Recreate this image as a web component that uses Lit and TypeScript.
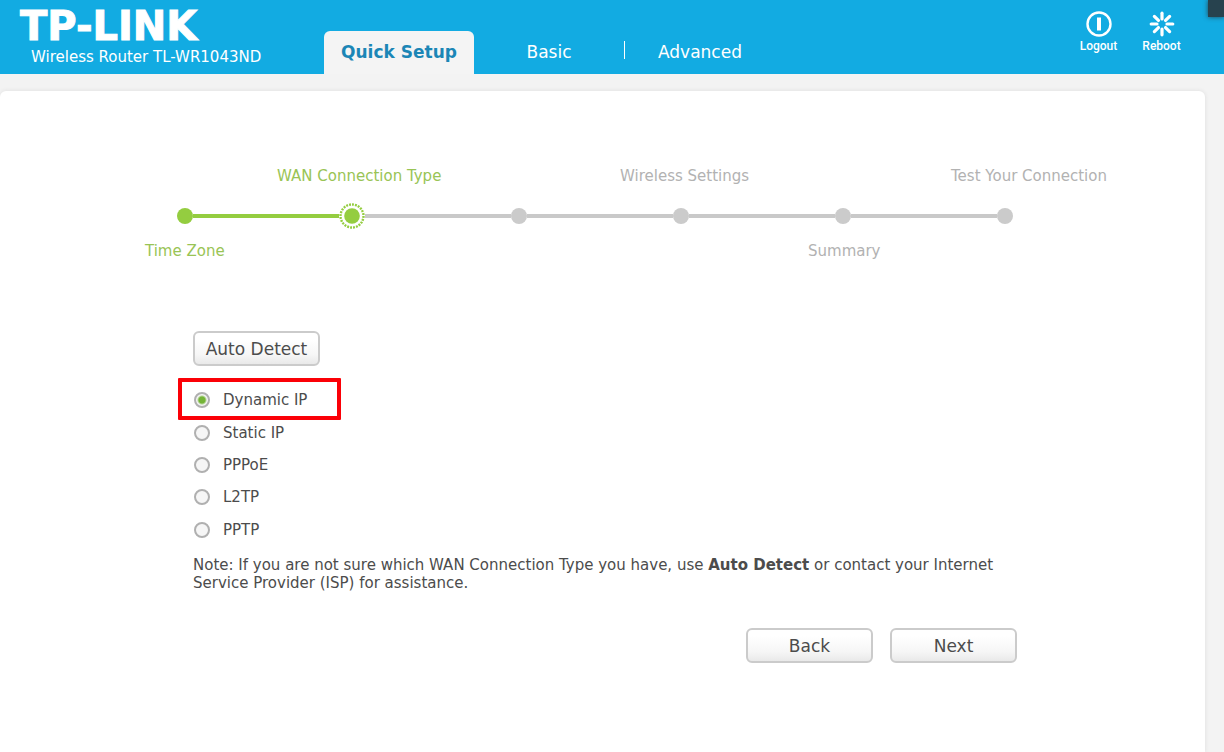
import { LitElement, html, css, svg } from "lit";
import { customElement, state } from "lit/decorators.js";

const STEPS = ["done", "current", "todo", "todo", "todo", "todo"];
const TYPES = ["Dynamic IP", "Static IP", "PPPoE", "L2TP", "PPTP"];
const RAYS = [0, 45, 90, 135, 180, 225, 270, 315];

@customElement("app-root")
export class AppRoot extends LitElement {
  @state() private selected = "Dynamic IP";

  static styles = css`
    :host {
      display: flex;
      flex-direction: column;
      position: relative;
      box-sizing: border-box;
      min-height: 100vh;
      overflow: hidden;
      background: #f3f3f3;
      color: #4c4c4c;
      font: 15px/18px Verdana, "DejaVu Sans", sans-serif;
    }
    *, *::before, *::after { box-sizing: border-box; }
    a { color: inherit; text-decoration: none; }

    .header { display: flex; height: 74px; background: #12abe2; color: #fff; }
    .brand { width: 324px; padding: 8px 0 0 20px; }
    .logo {
      margin: 0;
      font-size: 40px;
      line-height: 36px;
      font-weight: 700;
      -webkit-text-stroke: 1px #fff;
    }
    .model { margin: 4px 0 0 11px; }
    .tabs { display: flex; align-items: flex-end; }
    .tab {
      display: flex;
      align-items: center;
      justify-content: center;
      width: 150px;
      height: 43px;
      padding-bottom: 2px;
      font-size: 17px;
      line-height: 22px;
    }
    .tab.active {
      background: #f4f4f4;
      color: #1b86b6;
      font-weight: 700;
      border-radius: 6px 6px 0 0;
    }
    .divider { width: 1px; height: 18px; margin-bottom: 15px; background: #fff; }
    .actions {
      display: flex;
      margin: 10px 31px 0 auto;
      font: 500 12px/16px Roboto, Arial, sans-serif;
    }
    .action { display: flex; flex-direction: column; align-items: center; width: 63px; }
    .action svg { width: 28px; height: 28px; }
    .corner {
      position: absolute;
      top: 0;
      right: 0;
      width: 16px;
      height: 17px;
      background: #27424e;
      box-shadow: 0 0 5px #27424e;
    }

    .panel {
      flex: 1;
      margin: 17px 19px 0 0;
      padding-top: 76px;
      background: #fff;
      border-radius: 6px 6px 0 0;
      box-shadow: 0 0 4px #dcdcdc;
    }
    .labels { display: grid; color: #b2b2b2; white-space: nowrap; }
    .above { padding-left: 277px; grid-template-columns: 343px 331px auto; }
    .below { padding-left: 145px; grid-template-columns: 663px auto; }
    .labels .on { color: #99c455; }
    .track {
      display: flex;
      align-items: center;
      width: 836px;
      max-width: 80%;
      height: 26px;
      margin: 18px 0 13px 177px;
    }
    .dot { flex: none; width: 16px; height: 16px; border-radius: 50%; background: #cbcbcb; }
    .dot.done { background: #94cd40; }
    .ring { flex: none; width: 26px; height: 26px; }
    .line { flex: 1; height: 4px; background: #c9c9c9; }
    .line.done { background: #94cd40; }

    .form { max-width: 824px; margin: 71px 0 0 193px; padding-bottom: 40px; }
    .button {
      width: 127px;
      height: 35px;
      padding: 0;
      border: 2px solid #cbcbcb;
      border-radius: 6px;
      background: linear-gradient(#fff 20%, #f6f6f6 70%, #e9e9e9);
      color: #4c4c4c;
      font: inherit;
      font-size: 17px;
      line-height: 22px;
    }
    .types {
      display: grid;
      grid-template-rows: repeat(5, 1fr);
      height: 162px;
      margin: 18px 0 10px;
      padding: 0;
      border: 0;
    }
    .option { position: relative; display: flex; align-items: center; gap: 13px; }
    .radio {
      appearance: none;
      width: 16px;
      height: 16px;
      margin: 0 0 0 1px;
      border: 2px solid #b0b0b0;
      border-radius: 50%;
      background: #f6f6f6;
    }
    .radio:checked { background: radial-gradient(circle, #74b437 3px, #f4f4f4 5px); }
    .highlight {
      position: absolute;
      top: -6px;
      left: -15px;
      width: 163px;
      height: 42px;
      border: 4px solid #fb0007;
      border-radius: 1px;
      pointer-events: none;
    }
    .note { margin: 0; }
    .buttons { display: flex; justify-content: flex-end; gap: 17px; margin-top: 36px; }
  `;

  render() {
    return html`
      <header class="header">
        <div class="brand">
          <h1 class="logo">TP-LINK</h1>
          <p class="model">Wireless Router TL-WR1043ND</p>
        </div>
        <nav class="tabs">
          <a class="tab active" href="#quick">Quick Setup</a>
          <a class="tab" href="#basic">Basic</a>
          <span class="divider"></span>
          <a class="tab" href="#advanced">Advanced</a>
        </nav>
        <div class="actions">
          <a class="action" href="#logout">
            <svg viewBox="0 0 28 28" fill="none" stroke="#fff">
              <circle cx="14" cy="14" r="11.5" stroke-width="2.4" />
              <path d="M14 7.5v13" stroke-width="4" />
            </svg>
            Logout
          </a>
          <a class="action" href="#reboot">
            <svg viewBox="0 0 28 28" stroke="#fff" stroke-width="3.2" stroke-linecap="round">
              ${RAYS.map((a) => svg`<path d="M14 9V3.2" transform="rotate(${a} 14 14)" />`)}
            </svg>
            Reboot
          </a>
        </div>
      </header>
      <div class="corner"></div>

      <main class="panel">
        <div class="labels above">
          <span class="on">WAN Connection Type</span>
          <span>Wireless Settings</span>
          <span>Test Your Connection</span>
        </div>
        <div class="track">
          ${STEPS.map(
            (s, i) => html`
              ${i ? html`<span class="line ${i === 1 ? "done" : ""}"></span>` : ""}
              ${s === "current"
                ? html`<svg class="ring" viewBox="0 0 26 26">
                    <circle cx="13" cy="13" r="7.8" fill="#94cd40" />
                    <circle cx="13" cy="13" r="11.5" fill="none" stroke="#94cd40"
                      stroke-width="2.4" pathLength="96" stroke-dasharray="2.6 1.4" />
                  </svg>`
                : html`<span class="dot ${s}"></span>`}
            `
          )}
        </div>
        <div class="labels below">
          <span class="on">Time Zone</span>
          <span>Summary</span>
        </div>

        <form class="form" @submit=${(e: Event) => e.preventDefault()}>
          <button class="button" type="button">Auto Detect</button>
          <fieldset class="types" aria-label="WAN Connection Type">
            ${TYPES.map(
              (t) => html`
                <label class="option">
                  <input class="radio" type="radio" name="wan" .value=${t}
                    .checked=${this.selected === t} @change=${() => (this.selected = t)} />
                  ${t}
                  ${t === "Dynamic IP" ? html`<span class="highlight"></span>` : ""}
                </label>
              `
            )}
          </fieldset>
          <p class="note">
            Note: If you are not sure which WAN Connection Type you have, use
            <b>Auto Detect</b> or contact your Internet Service Provider (ISP) for assistance.
          </p>
          <div class="buttons">
            <button class="button" type="button">Back</button>
            <button class="button" type="submit">Next</button>
          </div>
        </form>
      </main>
    `;
  }
}
